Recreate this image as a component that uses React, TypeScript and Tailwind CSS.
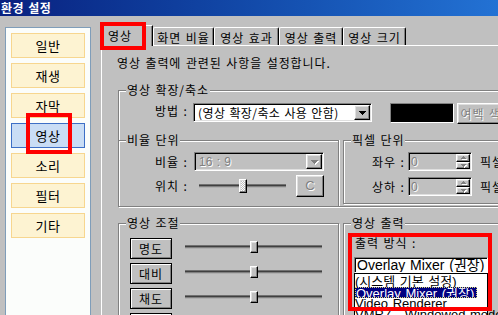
import React from "react";

const RAISED =
  "border border-t-white border-l-white border-r-black border-b-black shadow-[inset_-1px_-1px_0_#808080,inset_1px_1px_0_#dfdfdf]";
const SUNKEN =
  "border border-t-[#808080] border-l-[#808080] border-b-white border-r-white shadow-[inset_1px_1px_0_#000,inset_-1px_-1px_0_#dfdfdf]";
const ETCHED = "border border-[#808080] shadow-[inset_1px_1px_0_#fff,1px_1px_0_#fff]";
const DIS = "text-[#808080] [text-shadow:1px_1px_0_#fff]";
const LATIN = "font-['Liberation_Sans','Noto_Sans_CJK_KR',sans-serif] tracking-normal";

function Tri({ disabled }: { disabled?: boolean }) {
  return (
    <svg
      width="7"
      height="4"
      viewBox="0 0 7 4"
      shapeRendering="crispEdges"
      className={disabled ? "drop-shadow-[1px_1px_0_#fff]" : ""}
    >
      <path d="M0 0h7v1h-1v1h-1v1h-1v1h-1v-1h-1v-1h-1v-1h-1z" fill={disabled ? "#808080" : "#000"} />
    </svg>
  );
}

function SmallTri({ up }: { up?: boolean }) {
  return (
    <svg width="5" height="3" viewBox="0 0 5 3" shapeRendering="crispEdges" className="drop-shadow-[1px_1px_0_#fff]">
      <path
        d={up ? "M2 0h1v1h1v1h1v1h-5v-1h1v-1h1z" : "M0 0h5v1h-1v1h-1v1h-1v-1h-1v-1h-1z"}
        fill="#808080"
      />
    </svg>
  );
}

function Combo({
  className,
  children,
  disabled,
}: {
  className: string;
  children: React.ReactNode;
  disabled?: boolean;
}) {
  return (
    <div className={`${SUNKEN} ${disabled ? "bg-[#c0c0c0]" : "bg-white"} flex p-[1px] shrink-0 ${className}`}>
      <div
        className={`flex-1 flex items-center pl-[3px] whitespace-nowrap overflow-hidden ${disabled ? DIS : ""}`}
      >
        {children}
      </div>
      <div className={`${RAISED} w-[16px] flex items-center justify-center bg-[#c0c0c0]`}>
        <Tri disabled={disabled} />
      </div>
    </div>
  );
}

function Spin({ className }: { className: string }) {
  return (
    <div className={`${SUNKEN} bg-[#c0c0c0] flex p-[1px] shrink-0 ${className}`}>
      <div className={`flex-1 flex items-center pl-[1px] ${LATIN} ${DIS}`}>0</div>
      <div className="w-[14px] flex flex-col">
        <div className={`${RAISED} flex-1 flex items-center justify-center bg-[#c0c0c0]`}>
          <SmallTri up />
        </div>
        <div className={`${RAISED} flex-1 flex items-center justify-center bg-[#c0c0c0]`}>
          <SmallTri />
        </div>
      </div>
    </div>
  );
}

function Slider({
  className,
  thumbClass,
}: {
  className: string;
  thumbClass: string;
}) {
  return (
    <div className={`relative shrink-0 ${className}`}>
      <div className="absolute left-0 right-0 top-1/2 -translate-y-1/2 h-[3px] border-y border-t-[#808080] border-b-white bg-black" />
      <div className={`absolute top-0 h-full w-[8px] ${RAISED} ${thumbClass}`} />
    </div>
  );
}

function GroupLabel({ children }: { children: React.ReactNode }) {
  return (
    <span className="absolute -top-[8px] left-[7px] px-[1px] bg-[#c0c0c0] leading-[14px] whitespace-nowrap">
      {children}
    </span>
  );
}

const NAV = ["일반", "재생", "자막", "영상", "소리", "필터", "기타"];

const TABS: { label: string; w: string }[] = [
  { label: "화면 비율", w: "w-[61px]" },
  { label: "영상 효과", w: "w-[65px]" },
  { label: "영상 출력", w: "w-[64px]" },
  { label: "영상 크기", w: "w-[63px]" },
];

export default function App() {
  return (
    <div className="relative w-[498px] h-[315px] overflow-hidden bg-[#c0c0c0] text-black text-[12px] leading-[14px] tracking-[0.9px] font-['Noto_Sans_CJK_KR','Noto_Sans',sans-serif] [word-spacing:1px]">
      {/* title bar */}
      <div className="h-[16px] bg-linear-to-r from-[#0a2180] to-[#2372d4] text-white font-bold leading-[16px] pl-[1px] tracking-[0.5px]">
        환경 설정
      </div>

      <div className="flex items-start">
        {/* left navigation */}
        <div className="ml-[5px] mt-[11px] w-[86px] h-[300px] shrink-0 border border-[#7f9db9] bg-[#fbfdfb] flex flex-col gap-[5px] pt-[5px] px-[5px]">
          {NAV.map((n) => (
            <div
              key={n}
              className={`h-[25px] shrink-0 flex items-center justify-center border text-[13px] tracking-[0.5px] ${
                n === "영상" ? "bg-[#c9ddf5] border-[#3d6fc6]" : "bg-[#fdf3d2] border-[#f7d68f]"
              }`}
            >
              {n}
            </div>
          ))}
        </div>

        {/* tab control */}
        <div className="ml-[10px] mt-[9px] w-[420px] shrink-0 flex flex-col">
          <div className="flex items-end h-[20px]">
            <div className="relative z-10 -mb-[1px] h-[21px] w-[52px] shrink-0 bg-[#c0c0c0] border-t border-l border-white border-r border-r-black shadow-[inset_-1px_0_0_#808080] flex items-center pl-[6px]">
              영상
            </div>
            {TABS.map((t) => (
              <div
                key={t.label}
                className={`h-[18px] ${t.w} shrink-0 rounded-t-[2px] border-t border-l border-white border-r border-r-black shadow-[inset_-1px_0_0_#808080] flex items-center justify-center pt-[2px] whitespace-nowrap`}
              >
                {t.label}
              </div>
            ))}
          </div>

          {/* tab page */}
          <div className="h-[280px] border-t border-l border-white">
            <div className="mt-[10px] ml-[15px] whitespace-nowrap">영상 출력에 관련된 사항을 설정합니다.</div>

            {/* 영상 확장/축소 */}
            <div className={`relative mt-[20px] ml-[16px] w-[400px] h-[117px] ${ETCHED}`}>
              <GroupLabel>영상 확장/축소</GroupLabel>
              <div className="flex items-start mt-[12px]">
                <div className="w-[74px] pl-[36px] mt-[1px] shrink-0 whitespace-nowrap">방법 :</div>
                <Combo className="w-[179px] h-[19px] tracking-[0.4px]">(영상 확장/축소 사용 안함)</Combo>
                <div className="ml-[18px] w-[64px] h-[20px] shrink-0 bg-black border border-t-[#808080] border-l-[#808080] border-b-white border-r-white" />
                <div className={`ml-[3px] w-[60px] h-[21px] shrink-0 ${RAISED} flex items-center justify-center whitespace-nowrap ${DIS}`}>
                  여백 색...
                </div>
              </div>

              <div className="flex items-start mt-[16px]">
                {/* 비율 단위 */}
                <div className="relative w-[220px] h-[66px] shrink-0 border-t border-r border-[#808080] shadow-[inset_0_1px_0_#fff,1px_0_0_#fff]">
                  <GroupLabel>비율 단위</GroupLabel>
                  <div className="flex items-center mt-[11px]">
                    <div className="w-[75px] pl-[36px] shrink-0 whitespace-nowrap">비율 :</div>
                    <Combo className={`w-[130px] h-[19px] ${LATIN}`} disabled>
                      16 : 9
                    </Combo>
                  </div>
                  <div className="flex items-center mt-[4px] h-[22px]">
                    <div className="w-[80px] pl-[36px] shrink-0 whitespace-nowrap">위치 :</div>
                    <Slider
                      className="w-[87px] h-[14px]"
                      thumbClass="left-[40px] bg-[repeating-conic-gradient(#fff_0_25%,#c0c0c0_0_50%)] bg-[length:2px_2px]"
                    />
                    <div className={`ml-[10px] w-[28px] h-[22px] shrink-0 ${RAISED} flex items-center justify-center ${LATIN} text-[13px] ${DIS}`}>
                      C
                    </div>
                  </div>
                </div>

                {/* 픽셀 단위 */}
                <div className={`relative ml-[4px] w-[180px] h-[64px] shrink-0 ${ETCHED}`}>
                  <GroupLabel>픽셀 단위</GroupLabel>
                  <div className="flex items-center mt-[11px]">
                    <div className="w-[64px] pl-[28px] shrink-0 whitespace-nowrap">좌우 :</div>
                    <Spin className="w-[64px] h-[19px]" />
                    <div className="ml-[8px] whitespace-nowrap">픽셀</div>
                  </div>
                  <div className="flex items-center mt-[6px]">
                    <div className="w-[64px] pl-[28px] shrink-0 whitespace-nowrap">상하 :</div>
                    <Spin className="w-[64px] h-[19px]" />
                    <div className="ml-[8px] whitespace-nowrap">픽셀</div>
                  </div>
                </div>
              </div>
            </div>

            {/* lower groups */}
            <div className="flex items-start mt-[16px] ml-[16px]">
              {/* 영상 조절 */}
              <div className={`relative w-[221px] h-[120px] shrink-0 ${ETCHED}`}>
                <GroupLabel>영상 조절</GroupLabel>
                <div className="flex flex-col gap-[4px] pt-[14px] pl-[11px]">
                  {["명도", "대비", "채도", ""].map((b, i) => (
                    <div key={i} className="flex items-start">
                      <div className="w-[42px] h-[21px] shrink-0 border border-black bg-[#c0c0c0] shadow-[inset_1px_1px_0_#fff,inset_-1px_-1px_0_#808080] flex items-center justify-center">
                        {b}
                      </div>
                      <Slider className="ml-[13px] mt-[3px] w-[137px] h-[12px]" thumbClass="left-[65px] bg-[#c0c0c0]" />
                    </div>
                  ))}
                </div>
              </div>

              {/* 영상 출력 */}
              <div className={`relative ml-[4px] w-[200px] h-[120px] shrink-0 ${ETCHED}`}>
                <GroupLabel>영상 출력</GroupLabel>
                <div className="mt-[12px] pl-[11px] whitespace-nowrap">출력 방식 :</div>
                <div
                  className={`mt-[7px] ml-[10px] w-[134px] h-[16px] bg-white border border-t-[#808080] border-l-[#808080] border-b-white border-r-white shadow-[inset_1px_1px_0_#000] flex items-center pl-[2px] whitespace-nowrap overflow-hidden text-[14px] leading-[15px] ${LATIN}`}
                >
                  Overlay Mixer (권장)
                </div>
                <div className={`ml-[10px] w-[134px] h-[60px] bg-white border border-black pt-[2px] text-[13px] leading-[11px] ${LATIN}`}>
                  <div className="h-[11px] whitespace-nowrap">(시스템 기본 설정)</div>
                  <div className="relative z-10 h-[11px] w-fit pr-[2px] bg-[#000080] text-white whitespace-nowrap overflow-hidden border border-dotted border-[#d8d870]">
                    Overlay Mixer (권장)
                  </div>
                  <div className="h-[11px] whitespace-nowrap">Video Renderer</div>
                  <div className="h-[11px] whitespace-nowrap">VMR7 - Windowed mode</div>
                </div>
              </div>
            </div>
          </div>
        </div>
      </div>

      {/* red annotation boxes */}
      <div className="absolute z-20 left-[100px] top-[22px] w-[46px] h-[28px] border-4 border-[#ff0000] pointer-events-none" />
      <div className="absolute z-20 left-[26px] top-[113px] w-[46px] h-[41px] border-4 border-[#ff0000] pointer-events-none" />
      <div className="absolute z-20 left-[348px] top-[233px] w-[144px] h-[78px] border-4 border-[#ff0000] pointer-events-none" />
    </div>
  );
}
